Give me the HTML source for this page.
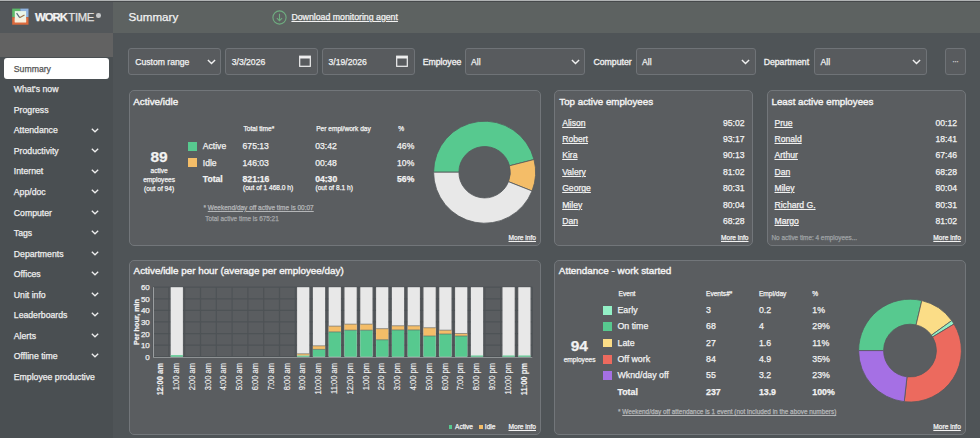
<!DOCTYPE html>
<html><head><meta charset="utf-8"><style>
html,body{margin:0;padding:0;width:980px;height:438px;overflow:hidden;background:#4f5457;font-family:"Liberation Sans", sans-serif;}
u{text-decoration-thickness:0.75px;text-underline-offset:0.9px;}
.t{position:absolute;white-space:nowrap;-webkit-text-stroke:0.25px currentColor;}
</style></head><body>
<div style="position:absolute;left:0px;top:0px;width:980px;height:438px;background:#4f5457;"></div>
<div style="position:absolute;left:0px;top:0px;width:113px;height:438px;background:#4a4f52;"></div>
<div style="position:absolute;left:0px;top:1px;width:113px;height:32px;background:#53575a;"></div>
<div style="position:absolute;left:0px;top:33px;width:113px;height:24px;background:#626262;"></div>
<div style="position:absolute;left:113px;top:1px;width:867px;height:32px;background:#5d6261;"></div>
<div style="position:absolute;left:0px;top:0px;width:980px;height:1px;background:#b0b3b4;"></div>
<div style="position:absolute;left:0px;top:1px;width:980px;height:1px;background:#46494b;"></div>
<svg style="position:absolute;left:0;top:0" width="40" height="30" viewBox="0 0 40 30">
<rect x="12.2" y="8.6" width="8.1" height="8.6" fill="#5cbb6a"/>
<rect x="20.3" y="8.6" width="8.2" height="8.6" fill="#8fb4e0"/>
<rect x="12.2" y="17.2" width="16.3" height="7.5" fill="#dd6a3c"/>
<rect x="14.8" y="11.1" width="11.3" height="11.2" fill="#eaf6e8"/>
<rect x="14.8" y="18.5" width="11.3" height="3.8" fill="#f8efdc"/>
<path d="M16.6 13.1 L19.7 17.6" stroke="#5a6b7c" stroke-width="1.2" fill="none"/>
<path d="M19.5 17.8 L24.5 15.0" stroke="#a0724e" stroke-width="1.2" fill="none"/>
</svg>
<div class="t" style="left:35.00px;top:12.03px;font-size:11.3px;line-height:11.3px;font-weight:700;color:#f4f4f4;letter-spacing:-0.95px;">WORK</div>
<div class="t" style="left:68.30px;top:12.03px;font-size:11.3px;line-height:11.3px;font-weight:400;color:#e4e4e4;letter-spacing:-0.3px;">TIME</div>
<div style="position:absolute;left:96px;top:13px;width:4.7px;height:4.7px;border-radius:50%;background:#c4c6c8"></div>
<div style="position:absolute;left:4px;top:58px;width:105px;height:21px;background:#ffffff;border-radius:3px;"></div>
<div class="t" style="left:13.80px;top:64.84px;font-size:8.7px;line-height:8.7px;font-weight:400;color:#555555;">Summary</div>
<div class="t" style="left:13.80px;top:85.37px;font-size:8.7px;line-height:8.7px;font-weight:400;color:#eeeeee;">What's now</div>
<div class="t" style="left:13.80px;top:105.90px;font-size:8.7px;line-height:8.7px;font-weight:400;color:#eeeeee;">Progress</div>
<div class="t" style="left:13.80px;top:126.43px;font-size:8.7px;line-height:8.7px;font-weight:400;color:#eeeeee;">Attendance</div>
<svg style="position:absolute;left:91px;top:127.59px" width="8" height="5" viewBox="0 0 8 5"><path d="M0.8 0.8 L4 3.8 L7.2 0.8" stroke="#eeeeee" stroke-width="1.3" fill="none"/></svg>
<div class="t" style="left:13.80px;top:146.96px;font-size:8.7px;line-height:8.7px;font-weight:400;color:#eeeeee;">Productivity</div>
<svg style="position:absolute;left:91px;top:148.12px" width="8" height="5" viewBox="0 0 8 5"><path d="M0.8 0.8 L4 3.8 L7.2 0.8" stroke="#eeeeee" stroke-width="1.3" fill="none"/></svg>
<div class="t" style="left:13.80px;top:167.49px;font-size:8.7px;line-height:8.7px;font-weight:400;color:#eeeeee;">Internet</div>
<svg style="position:absolute;left:91px;top:168.65px" width="8" height="5" viewBox="0 0 8 5"><path d="M0.8 0.8 L4 3.8 L7.2 0.8" stroke="#eeeeee" stroke-width="1.3" fill="none"/></svg>
<div class="t" style="left:13.80px;top:188.02px;font-size:8.7px;line-height:8.7px;font-weight:400;color:#eeeeee;">App/doc</div>
<svg style="position:absolute;left:91px;top:189.18px" width="8" height="5" viewBox="0 0 8 5"><path d="M0.8 0.8 L4 3.8 L7.2 0.8" stroke="#eeeeee" stroke-width="1.3" fill="none"/></svg>
<div class="t" style="left:13.80px;top:208.55px;font-size:8.7px;line-height:8.7px;font-weight:400;color:#eeeeee;">Computer</div>
<svg style="position:absolute;left:91px;top:209.71px" width="8" height="5" viewBox="0 0 8 5"><path d="M0.8 0.8 L4 3.8 L7.2 0.8" stroke="#eeeeee" stroke-width="1.3" fill="none"/></svg>
<div class="t" style="left:13.80px;top:229.08px;font-size:8.7px;line-height:8.7px;font-weight:400;color:#eeeeee;">Tags</div>
<svg style="position:absolute;left:91px;top:230.24px" width="8" height="5" viewBox="0 0 8 5"><path d="M0.8 0.8 L4 3.8 L7.2 0.8" stroke="#eeeeee" stroke-width="1.3" fill="none"/></svg>
<div class="t" style="left:13.80px;top:249.61px;font-size:8.7px;line-height:8.7px;font-weight:400;color:#eeeeee;">Departments</div>
<svg style="position:absolute;left:91px;top:250.77px" width="8" height="5" viewBox="0 0 8 5"><path d="M0.8 0.8 L4 3.8 L7.2 0.8" stroke="#eeeeee" stroke-width="1.3" fill="none"/></svg>
<div class="t" style="left:13.80px;top:270.14px;font-size:8.7px;line-height:8.7px;font-weight:400;color:#eeeeee;">Offices</div>
<svg style="position:absolute;left:91px;top:271.30px" width="8" height="5" viewBox="0 0 8 5"><path d="M0.8 0.8 L4 3.8 L7.2 0.8" stroke="#eeeeee" stroke-width="1.3" fill="none"/></svg>
<div class="t" style="left:13.80px;top:290.67px;font-size:8.7px;line-height:8.7px;font-weight:400;color:#eeeeee;">Unit info</div>
<svg style="position:absolute;left:91px;top:291.83px" width="8" height="5" viewBox="0 0 8 5"><path d="M0.8 0.8 L4 3.8 L7.2 0.8" stroke="#eeeeee" stroke-width="1.3" fill="none"/></svg>
<div class="t" style="left:13.80px;top:311.20px;font-size:8.7px;line-height:8.7px;font-weight:400;color:#eeeeee;">Leaderboards</div>
<svg style="position:absolute;left:91px;top:312.36px" width="8" height="5" viewBox="0 0 8 5"><path d="M0.8 0.8 L4 3.8 L7.2 0.8" stroke="#eeeeee" stroke-width="1.3" fill="none"/></svg>
<div class="t" style="left:13.80px;top:331.73px;font-size:8.7px;line-height:8.7px;font-weight:400;color:#eeeeee;">Alerts</div>
<svg style="position:absolute;left:91px;top:332.89px" width="8" height="5" viewBox="0 0 8 5"><path d="M0.8 0.8 L4 3.8 L7.2 0.8" stroke="#eeeeee" stroke-width="1.3" fill="none"/></svg>
<div class="t" style="left:13.80px;top:352.26px;font-size:8.7px;line-height:8.7px;font-weight:400;color:#eeeeee;">Offline time</div>
<svg style="position:absolute;left:91px;top:353.42px" width="8" height="5" viewBox="0 0 8 5"><path d="M0.8 0.8 L4 3.8 L7.2 0.8" stroke="#eeeeee" stroke-width="1.3" fill="none"/></svg>
<div class="t" style="left:13.80px;top:372.79px;font-size:8.7px;line-height:8.7px;font-weight:400;color:#eeeeee;">Employee productive</div>
<div class="t" style="left:128.60px;top:11.18px;font-size:11.6px;line-height:11.6px;font-weight:400;color:#f2f2f2;">Summary</div>
<svg style="position:absolute;left:272px;top:10px" width="15" height="15" viewBox="0 0 15 15">
<circle cx="7.5" cy="7.5" r="6.6" stroke="#6fae80" stroke-width="1.1" fill="none"/>
<path d="M7.5 3.8 V10.6 M4.9 8.2 L7.5 10.8 L10.1 8.2" stroke="#6fae80" stroke-width="1.1" fill="none"/>
</svg>
<div class="t" style="left:291.40px;top:12.89px;font-size:8.75px;line-height:8.75px;font-weight:400;color:#f2f2f2;text-decoration:underline;text-underline-offset:1px;">Download monitoring agent</div>
<div style="position:absolute;left:128px;top:48px;width:93px;height:27px;box-sizing:border-box;border:1.5px solid #6f7377;border-radius:3px;background:#585b5e"></div>
<div class="t" style="left:135.20px;top:57.88px;font-size:8.65px;line-height:8.65px;font-weight:400;color:#f2f2f2;">Custom range</div>
<svg style="position:absolute;left:206.50px;top:58.50px" width="9" height="6" viewBox="0 0 9 6"><path d="M0.9 1 L4.5 4.6 L8.1 1" stroke="#f0f0f0" stroke-width="1.4" fill="none"/></svg>
<div style="position:absolute;left:225px;top:48px;width:93px;height:27px;box-sizing:border-box;border:1.5px solid #6f7377;border-radius:3px;background:#585b5e"></div>
<div class="t" style="left:231.70px;top:57.88px;font-size:8.65px;line-height:8.65px;font-weight:400;color:#f2f2f2;">3/3/2026</div>
<svg style="position:absolute;left:299.3px;top:55px" width="12" height="12" viewBox="0 0 12 12"><rect x="0.7" y="1.2" width="10.6" height="10.1" stroke="#f0f0f0" stroke-width="1.2" fill="none"/><rect x="0.7" y="1.2" width="10.6" height="2.3" fill="#f0f0f0"/></svg>
<div style="position:absolute;left:322px;top:48px;width:92.5px;height:27px;box-sizing:border-box;border:1.5px solid #6f7377;border-radius:3px;background:#585b5e"></div>
<div class="t" style="left:328.50px;top:57.88px;font-size:8.65px;line-height:8.65px;font-weight:400;color:#f2f2f2;">3/19/2026</div>
<svg style="position:absolute;left:396px;top:55px" width="12" height="12" viewBox="0 0 12 12"><rect x="0.7" y="1.2" width="10.6" height="10.1" stroke="#f0f0f0" stroke-width="1.2" fill="none"/><rect x="0.7" y="1.2" width="10.6" height="2.3" fill="#f0f0f0"/></svg>
<div class="t" style="left:422.70px;top:57.84px;font-size:8.7px;line-height:8.7px;font-weight:400;color:#eeeeee;-webkit-text-stroke:0.35px #eeeeee;">Employee</div>
<div style="position:absolute;left:464.5px;top:48px;width:120.79999999999995px;height:27px;box-sizing:border-box;border:1.5px solid #6f7377;border-radius:3px;background:#585b5e"></div>
<div class="t" style="left:471.00px;top:57.88px;font-size:8.65px;line-height:8.65px;font-weight:400;color:#f2f2f2;">All</div>
<svg style="position:absolute;left:570.50px;top:58.50px" width="9" height="6" viewBox="0 0 9 6"><path d="M0.9 1 L4.5 4.6 L8.1 1" stroke="#f0f0f0" stroke-width="1.4" fill="none"/></svg>
<div class="t" style="left:593.50px;top:57.84px;font-size:8.7px;line-height:8.7px;font-weight:400;color:#eeeeee;-webkit-text-stroke:0.35px #eeeeee;">Computer</div>
<div style="position:absolute;left:635.6px;top:48px;width:120.0px;height:27px;box-sizing:border-box;border:1.5px solid #6f7377;border-radius:3px;background:#585b5e"></div>
<div class="t" style="left:642.00px;top:57.88px;font-size:8.65px;line-height:8.65px;font-weight:400;color:#f2f2f2;">All</div>
<svg style="position:absolute;left:741.00px;top:58.50px" width="9" height="6" viewBox="0 0 9 6"><path d="M0.9 1 L4.5 4.6 L8.1 1" stroke="#f0f0f0" stroke-width="1.4" fill="none"/></svg>
<div class="t" style="left:763.70px;top:57.84px;font-size:8.7px;line-height:8.7px;font-weight:400;color:#eeeeee;-webkit-text-stroke:0.35px #eeeeee;">Department</div>
<div style="position:absolute;left:814px;top:48px;width:112.5px;height:27px;box-sizing:border-box;border:1.5px solid #6f7377;border-radius:3px;background:#585b5e"></div>
<div class="t" style="left:820.50px;top:57.88px;font-size:8.65px;line-height:8.65px;font-weight:400;color:#f2f2f2;">All</div>
<svg style="position:absolute;left:912.00px;top:58.50px" width="9" height="6" viewBox="0 0 9 6"><path d="M0.9 1 L4.5 4.6 L8.1 1" stroke="#f0f0f0" stroke-width="1.4" fill="none"/></svg>
<div style="position:absolute;left:944.9px;top:48px;width:21.100000000000023px;height:27px;box-sizing:border-box;border:1.5px solid #6f7377;border-radius:3px;background:#585b5e"></div>
<div class="t" style="left:955.50px;transform:translateX(-50%);top:56.37px;font-size:7px;line-height:7px;font-weight:400;color:#d8d8d8;">...</div>
<div style="position:absolute;left:128.5px;top:89.5px;width:412.5px;height:156.0px;box-sizing:border-box;border:1.5px solid #72767a;border-radius:5px;background:#5a5d60"></div>
<div style="position:absolute;left:554px;top:89.5px;width:198.5px;height:156.0px;box-sizing:border-box;border:1.5px solid #72767a;border-radius:5px;background:#5a5d60"></div>
<div style="position:absolute;left:766.5px;top:89.5px;width:199.0px;height:156.0px;box-sizing:border-box;border:1.5px solid #72767a;border-radius:5px;background:#5a5d60"></div>
<div style="position:absolute;left:128.5px;top:259.5px;width:412.5px;height:175.0px;box-sizing:border-box;border:1.5px solid #72767a;border-radius:5px;background:#5a5d60"></div>
<div style="position:absolute;left:554px;top:259.5px;width:411.5px;height:175.0px;box-sizing:border-box;border:1.5px solid #72767a;border-radius:5px;background:#5a5d60"></div>
<div class="t" style="left:133.20px;top:96.52px;font-size:9.9px;line-height:9.9px;font-weight:400;color:#f2f2f2;-webkit-text-stroke:0.4px currentColor;">Active/idle</div>
<div class="t" style="left:559.30px;top:96.65px;font-size:9.75px;line-height:9.75px;font-weight:400;color:#f2f2f2;-webkit-text-stroke:0.4px currentColor;">Top active employees</div>
<div class="t" style="left:771.50px;top:96.65px;font-size:9.75px;line-height:9.75px;font-weight:400;color:#f2f2f2;-webkit-text-stroke:0.4px currentColor;">Least active employees</div>
<div class="t" style="left:133.60px;top:265.96px;font-size:9.85px;line-height:9.85px;font-weight:400;color:#f2f2f2;-webkit-text-stroke:0.4px currentColor;">Active/idle per hour (average per employee/day)</div>
<div class="t" style="left:558.80px;top:265.92px;font-size:9.9px;line-height:9.9px;font-weight:400;color:#f2f2f2;-webkit-text-stroke:0.4px currentColor;">Attendance - work started</div>
<div class="t" style="left:159.10px;transform:translateX(-50%);top:149.08px;font-size:15.5px;line-height:15.5px;font-weight:700;color:#f2f2f2;">89</div>
<div class="t" style="left:159.10px;transform:translateX(-50%);top:167.61px;font-size:6.6px;line-height:6.6px;font-weight:400;color:#f2f2f2;">active</div>
<div class="t" style="left:159.10px;transform:translateX(-50%);top:177.01px;font-size:6.6px;line-height:6.6px;font-weight:400;color:#f2f2f2;">employees</div>
<div class="t" style="left:159.10px;transform:translateX(-50%);top:186.21px;font-size:6.6px;line-height:6.6px;font-weight:400;color:#f2f2f2;">(out of 94)</div>
<div style="position:absolute;left:188px;top:142px;width:9px;height:8.5px;background:#57c98f;"></div>
<div style="position:absolute;left:188px;top:158px;width:9px;height:8.5px;background:#f4bd68;"></div>
<div class="t" style="left:202.80px;top:142.02px;font-size:8.6px;line-height:8.6px;font-weight:400;color:#f2f2f2;">Active</div>
<div class="t" style="left:202.80px;top:158.52px;font-size:8.6px;line-height:8.6px;font-weight:400;color:#f2f2f2;">Idle</div>
<div class="t" style="left:202.80px;top:174.72px;font-size:8.6px;line-height:8.6px;font-weight:700;color:#f2f2f2;">Total</div>
<div class="t" style="left:243.50px;top:126.41px;font-size:6.6px;line-height:6.6px;font-weight:400;color:#f2f2f2;">Total time*</div>
<div class="t" style="left:316.20px;top:126.41px;font-size:6.6px;line-height:6.6px;font-weight:400;color:#f2f2f2;">Per empl/work day</div>
<div class="t" style="left:398.30px;top:126.41px;font-size:6.6px;line-height:6.6px;font-weight:400;color:#f2f2f2;">%</div>
<div class="t" style="left:242.60px;top:142.02px;font-size:8.6px;line-height:8.6px;font-weight:400;color:#f2f2f2;">675:13</div>
<div class="t" style="left:242.60px;top:158.52px;font-size:8.6px;line-height:8.6px;font-weight:400;color:#f2f2f2;">146:03</div>
<div class="t" style="left:242.60px;top:174.72px;font-size:8.6px;line-height:8.6px;font-weight:700;color:#f2f2f2;">821:16</div>
<div class="t" style="left:243.00px;top:185.11px;font-size:6.6px;line-height:6.6px;font-weight:400;color:#f2f2f2;">(out of 1 468.0 h)</div>
<div class="t" style="left:315.20px;top:142.02px;font-size:8.6px;line-height:8.6px;font-weight:400;color:#f2f2f2;">03:42</div>
<div class="t" style="left:315.20px;top:158.52px;font-size:8.6px;line-height:8.6px;font-weight:400;color:#f2f2f2;">00:48</div>
<div class="t" style="left:315.20px;top:174.72px;font-size:8.6px;line-height:8.6px;font-weight:700;color:#f2f2f2;">04:30</div>
<div class="t" style="left:315.50px;top:185.11px;font-size:6.6px;line-height:6.6px;font-weight:400;color:#f2f2f2;">(out of 8.1 h)</div>
<div class="t" style="left:397.10px;top:142.02px;font-size:8.6px;line-height:8.6px;font-weight:400;color:#f2f2f2;">46%</div>
<div class="t" style="left:397.10px;top:158.52px;font-size:8.6px;line-height:8.6px;font-weight:400;color:#f2f2f2;">10%</div>
<div class="t" style="left:397.10px;top:174.72px;font-size:8.6px;line-height:8.6px;font-weight:700;color:#f2f2f2;">56%</div>
<div class="t" style="left:203.40px;top:204.70px;font-size:6.5px;line-height:6.5px;font-weight:400;color:#b4b6b8;">* <u>Weekend/day off active time is 00:07</u></div>
<div class="t" style="left:205.20px;top:216.38px;font-size:6.4px;line-height:6.4px;font-weight:400;color:#a5a7a9;">Total active time is 675:21</div>
<div class="t" style="right:444.00px;top:235.21px;font-size:6.6px;line-height:6.6px;font-weight:400;color:#f0f0f0;"><u>More info</u></div>
<svg style="position:absolute;left:0;top:0" width="980" height="438">
<path d="M433.60 172.20 A51 51 0 0 1 534.00 159.52 L509.49 165.81 A25.7 25.7 0 0 0 458.90 172.20 Z" fill="#57c98f" stroke="#55595c" stroke-width="0.8"/>
<path d="M534.00 159.52 A51 51 0 0 1 532.02 190.97 L508.50 181.66 A25.7 25.7 0 0 0 509.49 165.81 Z" fill="#f4bd68" stroke="#55595c" stroke-width="0.8"/>
<path d="M532.02 190.97 A51 51 0 0 1 433.60 172.20 L458.90 172.20 A25.7 25.7 0 0 0 508.50 181.66 Z" fill="#e8e8e8" stroke="#55595c" stroke-width="0.8"/>
<path d="M858.60 350.60 A51.4 51.4 0 0 1 921.82 300.58 L916.07 324.91 A26.4 26.4 0 0 0 883.60 350.60 Z" fill="#57c98f" stroke="#55595c" stroke-width="0.8"/>
<path d="M921.82 300.58 A51.4 51.4 0 0 1 951.74 320.61 L931.44 335.20 A26.4 26.4 0 0 0 916.07 324.91 Z" fill="#fbdd87" stroke="#55595c" stroke-width="0.8"/>
<path d="M951.74 320.61 A51.4 51.4 0 0 1 953.99 324.02 L932.60 336.95 A26.4 26.4 0 0 0 931.44 335.20 Z" fill="#93f0c6" stroke="#55595c" stroke-width="0.8"/>
<path d="M953.99 324.02 A51.4 51.4 0 0 1 904.22 401.67 L907.03 376.83 A26.4 26.4 0 0 0 932.60 336.95 Z" fill="#ec6a5e" stroke="#55595c" stroke-width="0.8"/>
<path d="M904.22 401.67 A51.4 51.4 0 0 1 858.60 350.60 L883.60 350.60 A26.4 26.4 0 0 0 907.03 376.83 Z" fill="#a570e4" stroke="#55595c" stroke-width="0.8"/>
<line x1="153.1" y1="356.70" x2="532.3000000000001" y2="356.70" stroke="#4e5356" stroke-width="1.2"/>
<line x1="153.1" y1="345.12" x2="532.3000000000001" y2="345.12" stroke="#4e5356" stroke-width="1.2"/>
<line x1="153.1" y1="333.53" x2="532.3000000000001" y2="333.53" stroke="#4e5356" stroke-width="1.2"/>
<line x1="153.1" y1="321.95" x2="532.3000000000001" y2="321.95" stroke="#4e5356" stroke-width="1.2"/>
<line x1="153.1" y1="310.37" x2="532.3000000000001" y2="310.37" stroke="#4e5356" stroke-width="1.2"/>
<line x1="153.1" y1="298.78" x2="532.3000000000001" y2="298.78" stroke="#4e5356" stroke-width="1.2"/>
<line x1="153.1" y1="287.20" x2="532.3000000000001" y2="287.20" stroke="#4e5356" stroke-width="1.2"/>
<line x1="153.10" y1="287.2" x2="153.10" y2="356.7" stroke="#4e5356" stroke-width="1.2"/>
<line x1="168.90" y1="287.2" x2="168.90" y2="356.7" stroke="#4e5356" stroke-width="1.2"/>
<line x1="184.70" y1="287.2" x2="184.70" y2="356.7" stroke="#4e5356" stroke-width="1.2"/>
<line x1="200.50" y1="287.2" x2="200.50" y2="356.7" stroke="#4e5356" stroke-width="1.2"/>
<line x1="216.30" y1="287.2" x2="216.30" y2="356.7" stroke="#4e5356" stroke-width="1.2"/>
<line x1="232.10" y1="287.2" x2="232.10" y2="356.7" stroke="#4e5356" stroke-width="1.2"/>
<line x1="247.90" y1="287.2" x2="247.90" y2="356.7" stroke="#4e5356" stroke-width="1.2"/>
<line x1="263.70" y1="287.2" x2="263.70" y2="356.7" stroke="#4e5356" stroke-width="1.2"/>
<line x1="279.50" y1="287.2" x2="279.50" y2="356.7" stroke="#4e5356" stroke-width="1.2"/>
<line x1="295.30" y1="287.2" x2="295.30" y2="356.7" stroke="#4e5356" stroke-width="1.2"/>
<line x1="311.10" y1="287.2" x2="311.10" y2="356.7" stroke="#4e5356" stroke-width="1.2"/>
<line x1="326.90" y1="287.2" x2="326.90" y2="356.7" stroke="#4e5356" stroke-width="1.2"/>
<line x1="342.70" y1="287.2" x2="342.70" y2="356.7" stroke="#4e5356" stroke-width="1.2"/>
<line x1="358.50" y1="287.2" x2="358.50" y2="356.7" stroke="#4e5356" stroke-width="1.2"/>
<line x1="374.30" y1="287.2" x2="374.30" y2="356.7" stroke="#4e5356" stroke-width="1.2"/>
<line x1="390.10" y1="287.2" x2="390.10" y2="356.7" stroke="#4e5356" stroke-width="1.2"/>
<line x1="405.90" y1="287.2" x2="405.90" y2="356.7" stroke="#4e5356" stroke-width="1.2"/>
<line x1="421.70" y1="287.2" x2="421.70" y2="356.7" stroke="#4e5356" stroke-width="1.2"/>
<line x1="437.50" y1="287.2" x2="437.50" y2="356.7" stroke="#4e5356" stroke-width="1.2"/>
<line x1="453.30" y1="287.2" x2="453.30" y2="356.7" stroke="#4e5356" stroke-width="1.2"/>
<line x1="469.10" y1="287.2" x2="469.10" y2="356.7" stroke="#4e5356" stroke-width="1.2"/>
<line x1="484.90" y1="287.2" x2="484.90" y2="356.7" stroke="#4e5356" stroke-width="1.2"/>
<line x1="500.70" y1="287.2" x2="500.70" y2="356.7" stroke="#4e5356" stroke-width="1.2"/>
<line x1="516.50" y1="287.2" x2="516.50" y2="356.7" stroke="#4e5356" stroke-width="1.2"/>
<line x1="532.30" y1="287.2" x2="532.30" y2="356.7" stroke="#4e5356" stroke-width="1.2"/>
<rect x="170.70" y="287.20" width="12.2" height="69.50" fill="#e8e8e8"/>
<rect x="170.70" y="355.19" width="12.2" height="1.51" fill="#57c98f"/>
<rect x="297.10" y="287.20" width="12.2" height="69.50" fill="#e8e8e8"/>
<rect x="297.10" y="353.80" width="12.2" height="1.85" fill="#f4bd68"/>
<rect x="297.10" y="355.66" width="12.2" height="1.04" fill="#57c98f"/>
<line x1="297.10" y1="353.80" x2="309.30" y2="353.80" stroke="#5b5f60" stroke-width="0.6"/>
<rect x="312.90" y="287.20" width="12.2" height="69.50" fill="#e8e8e8"/>
<rect x="312.90" y="345.81" width="12.2" height="3.59" fill="#f4bd68"/>
<rect x="312.90" y="349.40" width="12.2" height="7.30" fill="#57c98f"/>
<line x1="312.90" y1="345.81" x2="325.10" y2="345.81" stroke="#5b5f60" stroke-width="0.6"/>
<line x1="312.90" y1="349.40" x2="325.10" y2="349.40" stroke="#5b5f60" stroke-width="0.6"/>
<rect x="328.70" y="287.20" width="12.2" height="69.50" fill="#e8e8e8"/>
<rect x="328.70" y="326.12" width="12.2" height="5.79" fill="#f4bd68"/>
<rect x="328.70" y="331.91" width="12.2" height="24.79" fill="#57c98f"/>
<line x1="328.70" y1="326.12" x2="340.90" y2="326.12" stroke="#5b5f60" stroke-width="0.6"/>
<line x1="328.70" y1="331.91" x2="340.90" y2="331.91" stroke="#5b5f60" stroke-width="0.6"/>
<rect x="344.50" y="287.20" width="12.2" height="69.50" fill="#e8e8e8"/>
<rect x="344.50" y="324.15" width="12.2" height="6.02" fill="#f4bd68"/>
<rect x="344.50" y="330.17" width="12.2" height="26.53" fill="#57c98f"/>
<line x1="344.50" y1="324.15" x2="356.70" y2="324.15" stroke="#5b5f60" stroke-width="0.6"/>
<line x1="344.50" y1="330.17" x2="356.70" y2="330.17" stroke="#5b5f60" stroke-width="0.6"/>
<rect x="360.30" y="287.20" width="12.2" height="69.50" fill="#e8e8e8"/>
<rect x="360.30" y="324.15" width="12.2" height="6.02" fill="#f4bd68"/>
<rect x="360.30" y="330.17" width="12.2" height="26.53" fill="#57c98f"/>
<line x1="360.30" y1="324.15" x2="372.50" y2="324.15" stroke="#5b5f60" stroke-width="0.6"/>
<line x1="360.30" y1="330.17" x2="372.50" y2="330.17" stroke="#5b5f60" stroke-width="0.6"/>
<rect x="376.10" y="287.20" width="12.2" height="69.50" fill="#e8e8e8"/>
<rect x="376.10" y="328.67" width="12.2" height="11.12" fill="#f4bd68"/>
<rect x="376.10" y="339.79" width="12.2" height="16.91" fill="#57c98f"/>
<line x1="376.10" y1="328.67" x2="388.30" y2="328.67" stroke="#5b5f60" stroke-width="0.6"/>
<line x1="376.10" y1="339.79" x2="388.30" y2="339.79" stroke="#5b5f60" stroke-width="0.6"/>
<rect x="391.90" y="287.20" width="12.2" height="69.50" fill="#e8e8e8"/>
<rect x="391.90" y="325.77" width="12.2" height="4.17" fill="#f4bd68"/>
<rect x="391.90" y="329.94" width="12.2" height="26.76" fill="#57c98f"/>
<line x1="391.90" y1="325.77" x2="404.10" y2="325.77" stroke="#5b5f60" stroke-width="0.6"/>
<line x1="391.90" y1="329.94" x2="404.10" y2="329.94" stroke="#5b5f60" stroke-width="0.6"/>
<rect x="407.70" y="287.20" width="12.2" height="69.50" fill="#e8e8e8"/>
<rect x="407.70" y="325.77" width="12.2" height="4.17" fill="#f4bd68"/>
<rect x="407.70" y="329.94" width="12.2" height="26.76" fill="#57c98f"/>
<line x1="407.70" y1="325.77" x2="419.90" y2="325.77" stroke="#5b5f60" stroke-width="0.6"/>
<line x1="407.70" y1="329.94" x2="419.90" y2="329.94" stroke="#5b5f60" stroke-width="0.6"/>
<rect x="423.50" y="287.20" width="12.2" height="69.50" fill="#e8e8e8"/>
<rect x="423.50" y="327.74" width="12.2" height="8.22" fill="#f4bd68"/>
<rect x="423.50" y="335.97" width="12.2" height="20.73" fill="#57c98f"/>
<line x1="423.50" y1="327.74" x2="435.70" y2="327.74" stroke="#5b5f60" stroke-width="0.6"/>
<line x1="423.50" y1="335.97" x2="435.70" y2="335.97" stroke="#5b5f60" stroke-width="0.6"/>
<rect x="439.30" y="287.20" width="12.2" height="69.50" fill="#e8e8e8"/>
<rect x="439.30" y="330.17" width="12.2" height="3.82" fill="#f4bd68"/>
<rect x="439.30" y="334.00" width="12.2" height="22.70" fill="#57c98f"/>
<line x1="439.30" y1="330.17" x2="451.50" y2="330.17" stroke="#5b5f60" stroke-width="0.6"/>
<line x1="439.30" y1="334.00" x2="451.50" y2="334.00" stroke="#5b5f60" stroke-width="0.6"/>
<rect x="455.10" y="287.20" width="12.2" height="69.50" fill="#e8e8e8"/>
<rect x="455.10" y="333.53" width="12.2" height="2.43" fill="#f4bd68"/>
<rect x="455.10" y="335.97" width="12.2" height="20.73" fill="#57c98f"/>
<line x1="455.10" y1="333.53" x2="467.30" y2="333.53" stroke="#5b5f60" stroke-width="0.6"/>
<line x1="455.10" y1="335.97" x2="467.30" y2="335.97" stroke="#5b5f60" stroke-width="0.6"/>
<rect x="470.90" y="287.20" width="12.2" height="69.50" fill="#e8e8e8"/>
<rect x="470.90" y="355.54" width="12.2" height="1.16" fill="#57c98f"/>
<rect x="502.50" y="287.20" width="12.2" height="69.50" fill="#e8e8e8"/>
<rect x="502.50" y="355.54" width="12.2" height="1.16" fill="#57c98f"/>
<rect x="518.30" y="287.20" width="12.2" height="69.50" fill="#e8e8e8"/>
<rect x="518.30" y="355.54" width="12.2" height="1.16" fill="#57c98f"/>
<line x1="153.5" y1="287.2" x2="153.5" y2="357.2" stroke="#9a9ea0" stroke-width="1"/>
<line x1="153.1" y1="357.5" x2="532.3000000000001" y2="357.5" stroke="#8e9294" stroke-width="1.2"/>
</svg>
<div class="t" style="right:830.20px;top:353.73px;font-size:8px;line-height:8px;font-weight:400;color:#f0f0f0;">0</div>
<div class="t" style="right:830.20px;top:342.14px;font-size:8px;line-height:8px;font-weight:400;color:#f0f0f0;">10</div>
<div class="t" style="right:830.20px;top:330.56px;font-size:8px;line-height:8px;font-weight:400;color:#f0f0f0;">20</div>
<div class="t" style="right:830.20px;top:318.98px;font-size:8px;line-height:8px;font-weight:400;color:#f0f0f0;">30</div>
<div class="t" style="right:830.20px;top:307.39px;font-size:8px;line-height:8px;font-weight:400;color:#f0f0f0;">40</div>
<div class="t" style="right:830.20px;top:295.81px;font-size:8px;line-height:8px;font-weight:400;color:#f0f0f0;">50</div>
<div class="t" style="right:830.20px;top:284.23px;font-size:8px;line-height:8px;font-weight:400;color:#f0f0f0;">60</div>
<div class="t" style="left:137.2px;top:322px;font-size:7.2px;line-height:7.2px;font-weight:700;color:#f0f0f0;transform:translate(-50%,-50%) rotate(-90deg);white-space:nowrap">Per hour, min</div>
<svg style="position:absolute;left:0;top:0" width="980" height="438">
<text transform="translate(160.60,363) rotate(-90) scale(0.9,1)" text-anchor="end" dominant-baseline="central" font-family="Liberation Sans" font-size="8.4" font-weight="700" fill="#f0f0f0" stroke="#f0f0f0" stroke-width="0.15">12:00 am</text>
<text transform="translate(176.40,363) rotate(-90) scale(0.9,1)" text-anchor="end" dominant-baseline="central" font-family="Liberation Sans" font-size="8.4" font-weight="400" fill="#f0f0f0" stroke="#f0f0f0" stroke-width="0.15">1:00 am</text>
<text transform="translate(192.20,363) rotate(-90) scale(0.9,1)" text-anchor="end" dominant-baseline="central" font-family="Liberation Sans" font-size="8.4" font-weight="400" fill="#f0f0f0" stroke="#f0f0f0" stroke-width="0.15">2:00 am</text>
<text transform="translate(208.00,363) rotate(-90) scale(0.9,1)" text-anchor="end" dominant-baseline="central" font-family="Liberation Sans" font-size="8.4" font-weight="400" fill="#f0f0f0" stroke="#f0f0f0" stroke-width="0.15">3:00 am</text>
<text transform="translate(223.80,363) rotate(-90) scale(0.9,1)" text-anchor="end" dominant-baseline="central" font-family="Liberation Sans" font-size="8.4" font-weight="400" fill="#f0f0f0" stroke="#f0f0f0" stroke-width="0.15">4:00 am</text>
<text transform="translate(239.60,363) rotate(-90) scale(0.9,1)" text-anchor="end" dominant-baseline="central" font-family="Liberation Sans" font-size="8.4" font-weight="400" fill="#f0f0f0" stroke="#f0f0f0" stroke-width="0.15">5:00 am</text>
<text transform="translate(255.40,363) rotate(-90) scale(0.9,1)" text-anchor="end" dominant-baseline="central" font-family="Liberation Sans" font-size="8.4" font-weight="400" fill="#f0f0f0" stroke="#f0f0f0" stroke-width="0.15">6:00 am</text>
<text transform="translate(271.20,363) rotate(-90) scale(0.9,1)" text-anchor="end" dominant-baseline="central" font-family="Liberation Sans" font-size="8.4" font-weight="400" fill="#f0f0f0" stroke="#f0f0f0" stroke-width="0.15">7:00 am</text>
<text transform="translate(287.00,363) rotate(-90) scale(0.9,1)" text-anchor="end" dominant-baseline="central" font-family="Liberation Sans" font-size="8.4" font-weight="400" fill="#f0f0f0" stroke="#f0f0f0" stroke-width="0.15">8:00 am</text>
<text transform="translate(302.80,363) rotate(-90) scale(0.9,1)" text-anchor="end" dominant-baseline="central" font-family="Liberation Sans" font-size="8.4" font-weight="400" fill="#f0f0f0" stroke="#f0f0f0" stroke-width="0.15">9:00 am</text>
<text transform="translate(318.60,363) rotate(-90) scale(0.9,1)" text-anchor="end" dominant-baseline="central" font-family="Liberation Sans" font-size="8.4" font-weight="400" fill="#f0f0f0" stroke="#f0f0f0" stroke-width="0.15">10:00 am</text>
<text transform="translate(334.40,363) rotate(-90) scale(0.9,1)" text-anchor="end" dominant-baseline="central" font-family="Liberation Sans" font-size="8.4" font-weight="400" fill="#f0f0f0" stroke="#f0f0f0" stroke-width="0.15">11:00 am</text>
<text transform="translate(350.20,363) rotate(-90) scale(0.9,1)" text-anchor="end" dominant-baseline="central" font-family="Liberation Sans" font-size="8.4" font-weight="400" fill="#f0f0f0" stroke="#f0f0f0" stroke-width="0.15">12:00 pm</text>
<text transform="translate(366.00,363) rotate(-90) scale(0.9,1)" text-anchor="end" dominant-baseline="central" font-family="Liberation Sans" font-size="8.4" font-weight="400" fill="#f0f0f0" stroke="#f0f0f0" stroke-width="0.15">1:00 pm</text>
<text transform="translate(381.80,363) rotate(-90) scale(0.9,1)" text-anchor="end" dominant-baseline="central" font-family="Liberation Sans" font-size="8.4" font-weight="400" fill="#f0f0f0" stroke="#f0f0f0" stroke-width="0.15">2:00 pm</text>
<text transform="translate(397.60,363) rotate(-90) scale(0.9,1)" text-anchor="end" dominant-baseline="central" font-family="Liberation Sans" font-size="8.4" font-weight="400" fill="#f0f0f0" stroke="#f0f0f0" stroke-width="0.15">3:00 pm</text>
<text transform="translate(413.40,363) rotate(-90) scale(0.9,1)" text-anchor="end" dominant-baseline="central" font-family="Liberation Sans" font-size="8.4" font-weight="400" fill="#f0f0f0" stroke="#f0f0f0" stroke-width="0.15">4:00 pm</text>
<text transform="translate(429.20,363) rotate(-90) scale(0.9,1)" text-anchor="end" dominant-baseline="central" font-family="Liberation Sans" font-size="8.4" font-weight="400" fill="#f0f0f0" stroke="#f0f0f0" stroke-width="0.15">5:00 pm</text>
<text transform="translate(445.00,363) rotate(-90) scale(0.9,1)" text-anchor="end" dominant-baseline="central" font-family="Liberation Sans" font-size="8.4" font-weight="400" fill="#f0f0f0" stroke="#f0f0f0" stroke-width="0.15">6:00 pm</text>
<text transform="translate(460.80,363) rotate(-90) scale(0.9,1)" text-anchor="end" dominant-baseline="central" font-family="Liberation Sans" font-size="8.4" font-weight="400" fill="#f0f0f0" stroke="#f0f0f0" stroke-width="0.15">7:00 pm</text>
<text transform="translate(476.60,363) rotate(-90) scale(0.9,1)" text-anchor="end" dominant-baseline="central" font-family="Liberation Sans" font-size="8.4" font-weight="400" fill="#f0f0f0" stroke="#f0f0f0" stroke-width="0.15">8:00 pm</text>
<text transform="translate(492.40,363) rotate(-90) scale(0.9,1)" text-anchor="end" dominant-baseline="central" font-family="Liberation Sans" font-size="8.4" font-weight="400" fill="#f0f0f0" stroke="#f0f0f0" stroke-width="0.15">9:00 pm</text>
<text transform="translate(508.20,363) rotate(-90) scale(0.9,1)" text-anchor="end" dominant-baseline="central" font-family="Liberation Sans" font-size="8.4" font-weight="400" fill="#f0f0f0" stroke="#f0f0f0" stroke-width="0.15">10:00 pm</text>
<text transform="translate(524.00,363) rotate(-90) scale(0.9,1)" text-anchor="end" dominant-baseline="central" font-family="Liberation Sans" font-size="8.4" font-weight="700" fill="#f0f0f0" stroke="#f0f0f0" stroke-width="0.15">11:00 pm</text>
</svg>
<div style="position:absolute;left:448.8px;top:425px;width:3.5px;height:3.5px;background:#57c98f;"></div>
<div class="t" style="left:455.00px;top:424.21px;font-size:6.6px;line-height:6.6px;font-weight:400;color:#f2f2f2;">Active</div>
<div style="position:absolute;left:479.1px;top:425px;width:3.5px;height:3.5px;background:#f4bd68;"></div>
<div class="t" style="left:484.80px;top:424.21px;font-size:6.6px;line-height:6.6px;font-weight:400;color:#f2f2f2;">Idle</div>
<div class="t" style="right:444.00px;top:424.21px;font-size:6.6px;line-height:6.6px;font-weight:400;color:#f2f2f2;"><u>More info</u></div>
<div class="t" style="left:562.20px;top:118.72px;font-size:8.6px;line-height:8.6px;font-weight:400;color:#f2f2f2;"><u>Alison</u></div>
<div class="t" style="right:235.50px;top:118.72px;font-size:8.6px;line-height:8.6px;font-weight:400;color:#f2f2f2;">95:02</div>
<div class="t" style="left:562.20px;top:135.09px;font-size:8.6px;line-height:8.6px;font-weight:400;color:#f2f2f2;"><u>Robert</u></div>
<div class="t" style="right:235.50px;top:135.09px;font-size:8.6px;line-height:8.6px;font-weight:400;color:#f2f2f2;">93:17</div>
<div class="t" style="left:562.20px;top:151.46px;font-size:8.6px;line-height:8.6px;font-weight:400;color:#f2f2f2;"><u>Kira</u></div>
<div class="t" style="right:235.50px;top:151.46px;font-size:8.6px;line-height:8.6px;font-weight:400;color:#f2f2f2;">90:13</div>
<div class="t" style="left:562.20px;top:167.83px;font-size:8.6px;line-height:8.6px;font-weight:400;color:#f2f2f2;"><u>Valery</u></div>
<div class="t" style="right:235.50px;top:167.83px;font-size:8.6px;line-height:8.6px;font-weight:400;color:#f2f2f2;">81:02</div>
<div class="t" style="left:562.20px;top:184.20px;font-size:8.6px;line-height:8.6px;font-weight:400;color:#f2f2f2;"><u>George</u></div>
<div class="t" style="right:235.50px;top:184.20px;font-size:8.6px;line-height:8.6px;font-weight:400;color:#f2f2f2;">80:31</div>
<div class="t" style="left:562.20px;top:200.57px;font-size:8.6px;line-height:8.6px;font-weight:400;color:#f2f2f2;"><u>Miley</u></div>
<div class="t" style="right:235.50px;top:200.57px;font-size:8.6px;line-height:8.6px;font-weight:400;color:#f2f2f2;">80:04</div>
<div class="t" style="left:562.20px;top:216.94px;font-size:8.6px;line-height:8.6px;font-weight:400;color:#f2f2f2;"><u>Dan</u></div>
<div class="t" style="right:235.50px;top:216.94px;font-size:8.6px;line-height:8.6px;font-weight:400;color:#f2f2f2;">68:28</div>
<div class="t" style="right:231.50px;top:235.11px;font-size:6.6px;line-height:6.6px;font-weight:400;color:#f2f2f2;"><u>More info</u></div>
<div class="t" style="left:774.50px;top:118.72px;font-size:8.6px;line-height:8.6px;font-weight:400;color:#f2f2f2;"><u>Prue</u></div>
<div class="t" style="right:23.00px;top:118.72px;font-size:8.6px;line-height:8.6px;font-weight:400;color:#f2f2f2;">00:12</div>
<div class="t" style="left:774.50px;top:135.09px;font-size:8.6px;line-height:8.6px;font-weight:400;color:#f2f2f2;"><u>Ronald</u></div>
<div class="t" style="right:23.00px;top:135.09px;font-size:8.6px;line-height:8.6px;font-weight:400;color:#f2f2f2;">18:41</div>
<div class="t" style="left:774.50px;top:151.46px;font-size:8.6px;line-height:8.6px;font-weight:400;color:#f2f2f2;"><u>Arthur</u></div>
<div class="t" style="right:23.00px;top:151.46px;font-size:8.6px;line-height:8.6px;font-weight:400;color:#f2f2f2;">67:46</div>
<div class="t" style="left:774.50px;top:167.83px;font-size:8.6px;line-height:8.6px;font-weight:400;color:#f2f2f2;"><u>Dan</u></div>
<div class="t" style="right:23.00px;top:167.83px;font-size:8.6px;line-height:8.6px;font-weight:400;color:#f2f2f2;">68:28</div>
<div class="t" style="left:774.50px;top:184.20px;font-size:8.6px;line-height:8.6px;font-weight:400;color:#f2f2f2;"><u>Miley</u></div>
<div class="t" style="right:23.00px;top:184.20px;font-size:8.6px;line-height:8.6px;font-weight:400;color:#f2f2f2;">80:04</div>
<div class="t" style="left:774.50px;top:200.57px;font-size:8.6px;line-height:8.6px;font-weight:400;color:#f2f2f2;"><u>Richard G.</u></div>
<div class="t" style="right:23.00px;top:200.57px;font-size:8.6px;line-height:8.6px;font-weight:400;color:#f2f2f2;">80:31</div>
<div class="t" style="left:774.50px;top:216.94px;font-size:8.6px;line-height:8.6px;font-weight:400;color:#f2f2f2;"><u>Margo</u></div>
<div class="t" style="right:23.00px;top:216.94px;font-size:8.6px;line-height:8.6px;font-weight:400;color:#f2f2f2;">81:02</div>
<div class="t" style="left:771.50px;top:235.48px;font-size:6.4px;line-height:6.4px;font-weight:400;color:#9fa2a4;">No active time: 4 employees...</div>
<div class="t" style="right:19.20px;top:235.11px;font-size:6.6px;line-height:6.6px;font-weight:400;color:#f2f2f2;"><u>More info</u></div>
<div class="t" style="left:579.30px;transform:translateX(-50%);top:338.18px;font-size:15.5px;line-height:15.5px;font-weight:700;color:#f2f2f2;">94</div>
<div class="t" style="left:579.60px;transform:translateX(-50%);top:356.61px;font-size:6.6px;line-height:6.6px;font-weight:400;color:#f2f2f2;">employees</div>
<div class="t" style="left:618.60px;top:290.91px;font-size:6.6px;line-height:6.6px;font-weight:400;color:#f2f2f2;">Event</div>
<div class="t" style="left:706.00px;top:290.91px;font-size:6.6px;line-height:6.6px;font-weight:400;color:#f2f2f2;">Events#*</div>
<div class="t" style="left:758.90px;top:290.91px;font-size:6.6px;line-height:6.6px;font-weight:400;color:#f2f2f2;">Empl/day</div>
<div class="t" style="left:812.30px;top:290.91px;font-size:6.6px;line-height:6.6px;font-weight:400;color:#f2f2f2;">%</div>
<div style="position:absolute;left:603px;top:306.0px;width:8.7px;height:8.5px;background:#93f0c6;"></div>
<div class="t" style="left:617.50px;top:306.05px;font-size:8.8px;line-height:8.8px;font-weight:400;color:#f2f2f2;">Early</div>
<div class="t" style="left:706.00px;top:306.05px;font-size:8.8px;line-height:8.8px;font-weight:400;color:#f2f2f2;">3</div>
<div class="t" style="left:758.90px;top:306.05px;font-size:8.8px;line-height:8.8px;font-weight:400;color:#f2f2f2;">0.2</div>
<div class="t" style="left:812.30px;top:306.05px;font-size:8.8px;line-height:8.8px;font-weight:400;color:#f2f2f2;">1%</div>
<div style="position:absolute;left:603px;top:322.34px;width:8.7px;height:8.5px;background:#57c98f;"></div>
<div class="t" style="left:617.50px;top:322.39px;font-size:8.8px;line-height:8.8px;font-weight:400;color:#f2f2f2;">On time</div>
<div class="t" style="left:706.00px;top:322.39px;font-size:8.8px;line-height:8.8px;font-weight:400;color:#f2f2f2;">68</div>
<div class="t" style="left:758.90px;top:322.39px;font-size:8.8px;line-height:8.8px;font-weight:400;color:#f2f2f2;">4</div>
<div class="t" style="left:812.30px;top:322.39px;font-size:8.8px;line-height:8.8px;font-weight:400;color:#f2f2f2;">29%</div>
<div style="position:absolute;left:603px;top:338.68px;width:8.7px;height:8.5px;background:#fbdd87;"></div>
<div class="t" style="left:617.50px;top:338.73px;font-size:8.8px;line-height:8.8px;font-weight:400;color:#f2f2f2;">Late</div>
<div class="t" style="left:706.00px;top:338.73px;font-size:8.8px;line-height:8.8px;font-weight:400;color:#f2f2f2;">27</div>
<div class="t" style="left:758.90px;top:338.73px;font-size:8.8px;line-height:8.8px;font-weight:400;color:#f2f2f2;">1.6</div>
<div class="t" style="left:812.30px;top:338.73px;font-size:8.8px;line-height:8.8px;font-weight:400;color:#f2f2f2;">11%</div>
<div style="position:absolute;left:603px;top:355.02px;width:8.7px;height:8.5px;background:#ec6a5e;"></div>
<div class="t" style="left:617.50px;top:355.07px;font-size:8.8px;line-height:8.8px;font-weight:400;color:#f2f2f2;">Off work</div>
<div class="t" style="left:706.00px;top:355.07px;font-size:8.8px;line-height:8.8px;font-weight:400;color:#f2f2f2;">84</div>
<div class="t" style="left:758.90px;top:355.07px;font-size:8.8px;line-height:8.8px;font-weight:400;color:#f2f2f2;">4.9</div>
<div class="t" style="left:812.30px;top:355.07px;font-size:8.8px;line-height:8.8px;font-weight:400;color:#f2f2f2;">35%</div>
<div style="position:absolute;left:603px;top:371.36px;width:8.7px;height:8.5px;background:#a570e4;"></div>
<div class="t" style="left:617.50px;top:371.41px;font-size:8.8px;line-height:8.8px;font-weight:400;color:#f2f2f2;">Wknd/day off</div>
<div class="t" style="left:706.00px;top:371.41px;font-size:8.8px;line-height:8.8px;font-weight:400;color:#f2f2f2;">55</div>
<div class="t" style="left:758.90px;top:371.41px;font-size:8.8px;line-height:8.8px;font-weight:400;color:#f2f2f2;">3.2</div>
<div class="t" style="left:812.30px;top:371.41px;font-size:8.8px;line-height:8.8px;font-weight:400;color:#f2f2f2;">23%</div>
<div class="t" style="left:617.50px;top:387.75px;font-size:8.8px;line-height:8.8px;font-weight:700;color:#f2f2f2;">Total</div>
<div class="t" style="left:706.00px;top:387.75px;font-size:8.8px;line-height:8.8px;font-weight:700;color:#f2f2f2;">237</div>
<div class="t" style="left:758.90px;top:387.75px;font-size:8.8px;line-height:8.8px;font-weight:700;color:#f2f2f2;">13.9</div>
<div class="t" style="left:812.30px;top:387.75px;font-size:8.8px;line-height:8.8px;font-weight:700;color:#f2f2f2;">100%</div>
<div class="t" style="left:618.00px;top:409.08px;font-size:6.4px;line-height:6.4px;font-weight:400;color:#b3b5b7;">* <u>Weekend/day off attendance is 1 event (not included in the above numbers)</u></div>
<div class="t" style="right:19.20px;top:423.91px;font-size:6.6px;line-height:6.6px;font-weight:400;color:#f2f2f2;"><u>More info</u></div>
</body></html>
